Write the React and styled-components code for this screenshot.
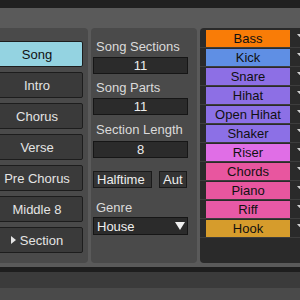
import React from 'react';
import styled, { createGlobalStyle } from 'styled-components';

const Global = createGlobalStyle`
  html, body { margin: 0; padding: 0; background: #5a5a5a; }
  body { font-family: "Liberation Sans", Arial, sans-serif; }
  * { box-sizing: border-box; }
`;

const Screen = styled.div`
  width: 300px;
  height: 300px;
  overflow: hidden;
  background: #5a5a5a;
  display: flex;
  flex-direction: column;
`;

const Band = styled.div`
  flex: none;
  height: ${p => p.h}px;
  background: ${p => p.bg};
`;

const Filler = styled.div`
  flex: 1;
  background: #4a4a4a;
`;

const Main = styled.div`
  flex: none;
  height: 235px;
  display: flex;
  gap: 3px;
  margin-left: -14px;
`;

const Panel = styled.div`
  flex: none;
  background: #4a4a4a;
  border-radius: 4px;
`;

const LeftPanel = styled(Panel)`
  width: 102px;
  padding: 13px 5px 0;
  display: flex;
  flex-direction: column;
  gap: 5px;
`;

const SectionButton = styled.div`
  height: 26px;
  border: 1px solid #1d1d1d;
  border-radius: 2px;
  background: ${p => (p.$active ? '#94d3e1' : '#3a3a3a')};
  color: ${p => (p.$active ? '#111' : '#e4e4e4')};
  font-size: 13px;
  display: flex;
  align-items: center;
  justify-content: center;
  gap: 4px;
`;

const MiddlePanel = styled(Panel)`
  width: 106px;
  padding: 11px 9px 0 2px;
  display: flex;
  flex-direction: column;
`;

const Label = styled.div`
  font-size: 13px;
  line-height: 16px;
  color: #dadada;
  padding-left: 3px;
  margin-top: ${p => p.$mt || 0}px;
  white-space: nowrap;
`;

const Field = styled.div`
  height: 17px;
  margin-top: ${p => p.$mt || 0}px;
  border: 1px solid #161616;
  background: #2b2b2b;
  color: #eeeeee;
  font-size: 13px;
  line-height: 15px;
  text-align: center;
`;

const ToggleRow = styled.div`
  display: flex;
  gap: 7px;
  margin-top: 13px;
  height: 17px;
`;

const Toggle = styled.div`
  width: ${p => p.$w}px;
  height: 17px;
  border: 1px solid #1a1a1a;
  background: #343434;
  color: #eeeeee;
  font-size: 13px;
  line-height: 15px;
  padding: 0 3px;
  overflow: hidden;
  white-space: nowrap;
`;

const Dropdown = styled.div`
  height: 18px;
  margin-top: 1px;
  border: 1px solid #161616;
  background: #2b2b2b;
  color: #eeeeee;
  font-size: 13px;
  display: flex;
  align-items: center;
  justify-content: space-between;
  padding: 0 2px 0 3px;
`;

const RightPanel = styled(Panel)`
  width: 112px;
  background: #2a2a2a;
  padding-top: 1px;
  display: flex;
  flex-direction: column;
`;

const TrackRow = styled.div`
  height: 19px;
  padding-top: 1px;
  display: flex;
  border-bottom: 1px solid #3d3d3d;
`;

const Gutter = styled.div`
  width: 6px;
  flex: none;
`;

const Chip = styled.div`
  width: 84px;
  flex: none;
  height: 17px;
  background: ${p => p.$color};
  color: #111;
  font-size: 13px;
  line-height: 17px;
  text-align: center;
`;

const RowMenu = styled.div`
  flex: 1;
  padding: 4px 0 0 7px;
  display: flex;
  align-items: flex-start;
`;

const sections = ['Song', 'Intro', 'Chorus', 'Verse', 'Pre Chorus', 'Middle 8'];

const tracks = [
  ['Bass', '#f97c07'],
  ['Kick', '#5f8fe4'],
  ['Snare', '#8d6fe5'],
  ['Hihat', '#8d6fe5'],
  ['Open Hihat', '#8c70e6'],
  ['Shaker', '#8c70e6'],
  ['Riser', '#e06ee6'],
  ['Chords', '#e8569f'],
  ['Piano', '#e8569f'],
  ['Riff', '#e859a6'],
  ['Hook', '#d69c2c'],
];

export default function App() {
  return (
    <>
      <Global />
      <Screen>
        <Band h={8} bg="#202020" />
        <Band h={20} bg="#5a5a5a" />
        <Main>
          <LeftPanel>
            {sections.map((s, i) => (
              <SectionButton key={s} $active={i === 0}>{s}</SectionButton>
            ))}
            <SectionButton>
              <svg width="5" height="8" viewBox="0 0 5 8">
                <polygon points="0,0 5,4 0,8" fill="#e4e4e4" />
              </svg>
              Section
            </SectionButton>
          </LeftPanel>
          <MiddlePanel>
            <Label>Song Sections</Label>
            <Field $mt={2}>11</Field>
            <Label $mt={6}>Song Parts</Label>
            <Field $mt={2}>11</Field>
            <Label $mt={7}>Section Length</Label>
            <Field $mt={3}>8</Field>
            <ToggleRow>
              <Toggle $w={59}>Halftime</Toggle>
              <Toggle $w={28}>Aut</Toggle>
            </ToggleRow>
            <Label $mt={12}>Genre</Label>
            <Dropdown>
              <span>House</span>
              <svg width="10" height="8" viewBox="0 0 10 8">
                <polygon points="0,0 10,0 5,8" fill="#f0f0f0" />
              </svg>
            </Dropdown>
          </MiddlePanel>
          <RightPanel>
            {tracks.map(([name, color]) => (
              <TrackRow key={name}>
                <Gutter />
                <Chip $color={color}>{name}</Chip>
                <RowMenu>
                  <svg width="5" height="3" viewBox="0 0 5 3">
                    <polygon points="0,0 5,0 2.5,3" fill="#cfcfcf" />
                  </svg>
                </RowMenu>
              </TrackRow>
            ))}
          </RightPanel>
        </Main>
        <Band h={4} bg="#5a5a5a" />
        <Band h={5} bg="#1e1e1e" />
        <Band h={16} bg="#3b3b3b" />
        <Filler />
      </Screen>
    </>
  );
}
